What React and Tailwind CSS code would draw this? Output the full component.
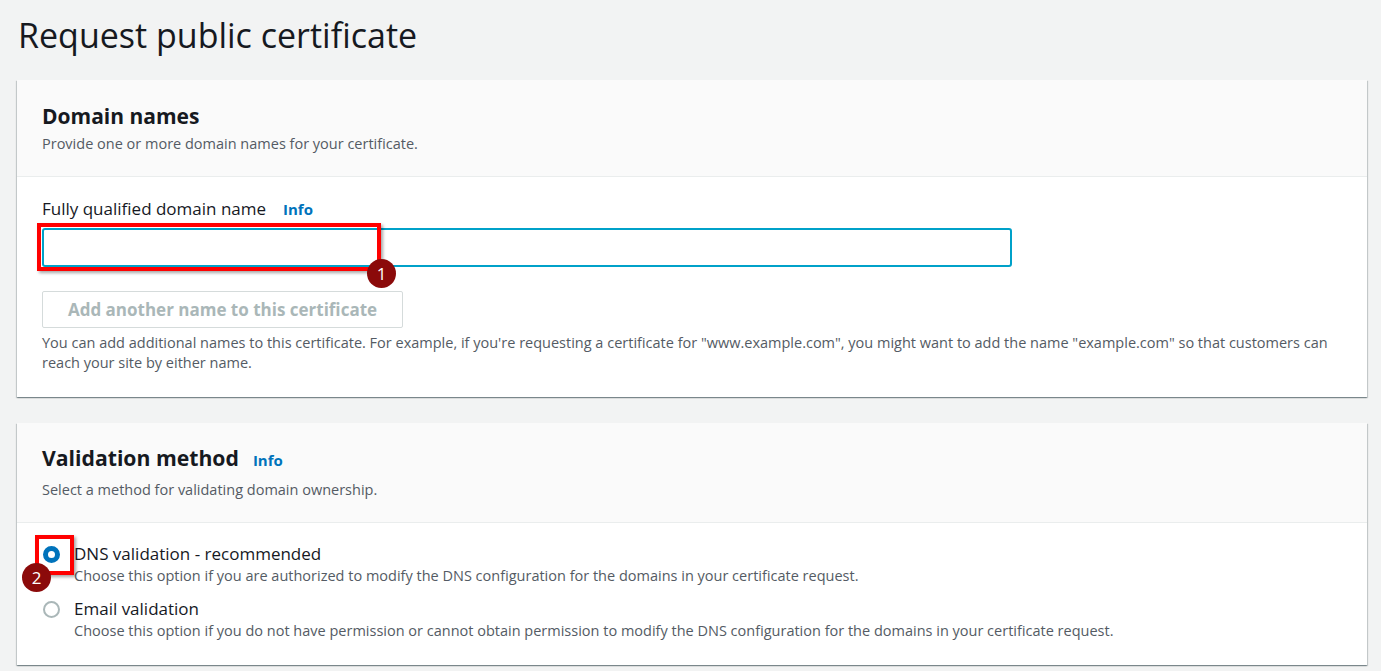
import React from "react";

function Info({ className = "" }) {
  return <span className={`text-[15px] font-bold text-[#0073bb] ${className}`}>Info</span>;
}

function Badge({ n, className = "" }) {
  return (
    <div className={`absolute w-[29px] h-[29px] rounded-full bg-[#8b0a0a] text-white text-[17px] leading-none flex items-center justify-center ${className}`}>
      {n}
    </div>
  );
}

const cardShadow =
  "shadow-[0_1px_1px_0_rgba(0,28,36,0.3),1px_1px_1px_0_rgba(0,28,36,0.15),-1px_1px_1px_0_rgba(0,28,36,0.15)]";

export default function App() {
  return (
    <div className="min-h-screen bg-[#f2f3f3] text-[#16191f] font-['Open_Sans',sans-serif] px-[17px] pt-[12px] pb-[4px] overflow-hidden">
      <h1 className="text-[34px] leading-[46px] font-normal pl-[1px]">Request public certificate</h1>

      {/* Domain names */}
      <section className={`mt-[22px] bg-white w-[1350px] ${cardShadow}`}>
        <div className="bg-[#fafafa] border-b border-[#eaeded] px-[25px] pt-[21px] pb-[22px]">
          <h2 className="text-[21px] leading-[30px] font-bold">Domain names</h2>
          <p className="text-[14.5px] leading-[20px] text-[#545b64] mt-[3px]">Provide one or more domain names for your certificate.</p>
        </div>
        <div className="px-[25px] pt-[20px] pb-[24px]">
          <div className="flex items-baseline gap-[17px]">
            <span className="text-[17px] leading-[24px]">Fully qualified domain name</span>
            <Info />
          </div>
          <div className="relative mt-[7px] w-[970px]">
            <input className="block w-full h-[39px] border-2 border-[#00a1c9] rounded-[3px] bg-white outline-none" />
            <div className="absolute left-[-5px] top-[-5px] w-[344px] h-[48px] border-[4px] border-[#ff0000] shadow-[2px_2px_3px_rgba(0,0,0,0.35)]"></div>
            <Badge n="1" className="left-[325px] top-[31px]" />
          </div>
          <button className="mt-[24px] h-[37px] w-[361px] border border-[#d5dbdb] rounded-[2px] text-[17px] font-bold text-[#aab7b8] bg-white">
            Add another name to this certificate
          </button>
          <p className="mt-[5px] text-[14.5px] leading-[20px] text-[#545b64]">
            You can add additional names to this certificate. For example, if you're requesting a certificate for "www.example.com", you might want to add the name "example.com" so that customers can reach your site by either name.
          </p>
        </div>
      </section>

      {/* Validation method */}
      <section className={`mt-[26px] bg-white w-[1350px] ${cardShadow}`}>
        <div className="bg-[#fafafa] border-b border-[#eaeded] px-[25px] pt-[20px] pb-[22px]">
          <div className="flex items-baseline gap-[14px]">
            <h2 className="text-[21.2px] leading-[30px] font-bold">Validation method</h2>
            <Info />
          </div>
          <p className="text-[14.5px] leading-[20px] text-[#545b64] mt-[7px]">Select a method for validating domain ownership.</p>
        </div>
        <div className="px-[25px] pt-[19px] pb-[24px] flex flex-col gap-[11px]">
          <div className="relative flex gap-[14px]">
            <div className="pt-[4px] pl-[1px]">
              <div className="w-[17px] h-[17px] rounded-full border-[5px] border-[#0073bb] bg-white"></div>
            </div>
            <div>
              <div className="text-[17px] leading-[24px]">DNS validation - recommended</div>
              <div className="text-[14.5px] leading-[20px] text-[#545b64]">Choose this option if you are authorized to modify the DNS configuration for the domains in your certificate request.</div>
            </div>
            <div className="absolute left-[-7px] top-[-7px] w-[39px] h-[40px] border-[4px] border-[#ff0000] shadow-[2px_2px_3px_rgba(0,0,0,0.35)]"></div>
            <Badge n="2" className="left-[-20px] top-[21px]" />
          </div>
          <div className="flex gap-[14px]">
            <div className="pt-[4px] pl-[1px]">
              <div className="w-[17px] h-[17px] rounded-full border-2 border-[#aab7b8] bg-white"></div>
            </div>
            <div>
              <div className="text-[17px] leading-[24px]">Email validation</div>
              <div className="text-[14.5px] leading-[20px] text-[#545b64]">Choose this option if you do not have permission or cannot obtain permission to modify the DNS configuration for the domains in your certificate request.</div>
            </div>
          </div>
        </div>
      </section>
    </div>
  );
}
